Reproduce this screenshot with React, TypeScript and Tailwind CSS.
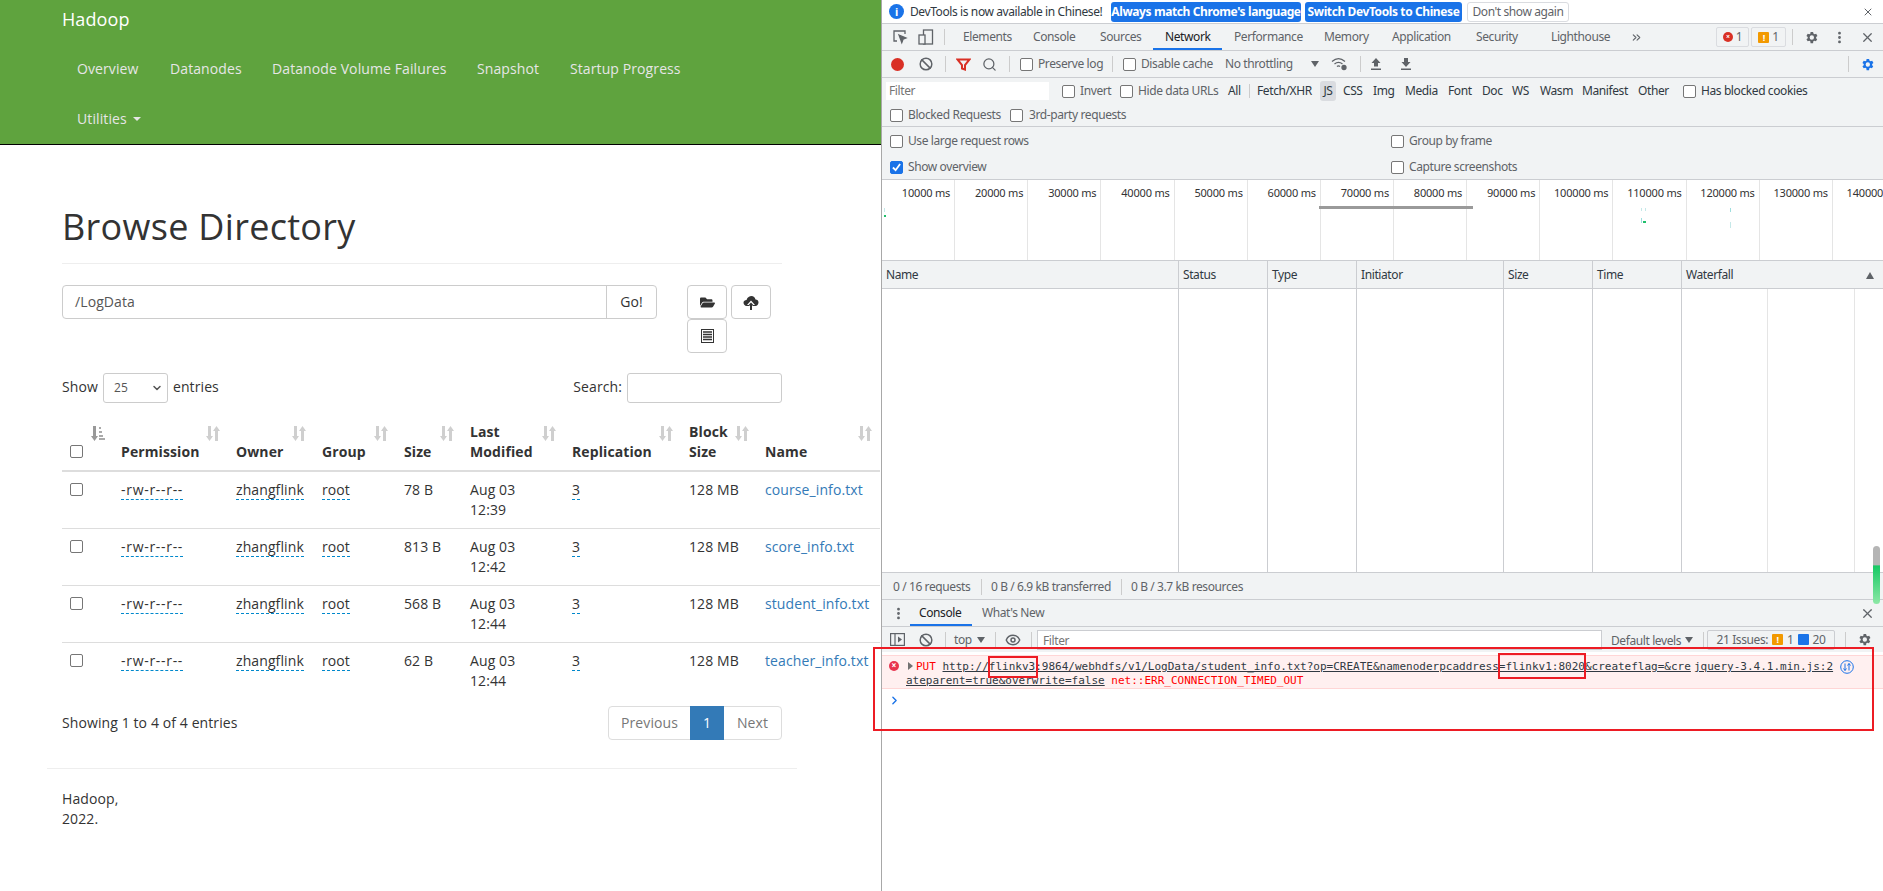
import { ReactNode } from "react";
import { X, MoreVertical, Search, ChevronRight, ChevronsRight, Eye, Ban, ChevronDown } from "lucide-react";
import { FaFolderOpen } from "react-icons/fa";

const files = [
  { size: "78 B", time: "12:39", name: "course_info.txt" },
  { size: "813 B", time: "12:42", name: "score_info.txt" },
  { size: "568 B", time: "12:44", name: "student_info.txt" },
  { size: "62 B", time: "12:44", name: "teacher_info.txt" },
];

const columns = [
  { label: ["", ""], w: "w-[51px]" },
  { label: ["", "Permission"], w: "w-[115px]" },
  { label: ["", "Owner"], w: "w-[86px]" },
  { label: ["", "Group"], w: "w-[82px]" },
  { label: ["", "Size"], w: "w-[66px]" },
  { label: ["Last", "Modified"], w: "w-[102px]" },
  { label: ["", "Replication"], w: "w-[117px]" },
  { label: ["Block", "Size"], w: "w-[76px]" },
  { label: ["", "Name"], w: "w-[123px]" },
];

function SortIcon({ first }: { first?: boolean }) {
  return (
    <svg width="14" height="15" viewBox="0 0 14 15" className="absolute right-[8px] top-[5px] text-[#cfcfcf]" fill="currentColor">
      {first ? (
        <>
          <path d="M2 0h3v10h2l-3.500 5L0 10h2z" fill="#999" />
          <path d="M8 1h2v2H8zM8 5h3v2H8zM8 9h4v2H8zM8 12h6v2H8z" fill="#aaa" />
        </>
      ) : (
        <>
          <path d="M2 0h3v10h2l-3.500 5L0 10h2z" />
          <path d="M9 15V5H7l3.500-5L14 5h-2v10z" />
        </>
      )}
    </svg>
  );
}

function Box({ checked, className = "" }: { checked?: boolean; className?: string }) {
  return (
    <span
      className={`inline-flex h-[13px] w-[13px] shrink-0 items-center justify-center rounded-[2px] border ${
        checked ? "border-[#1a73e8] bg-[#1a73e8]" : "border-[#767676] bg-white"
      } ${className}`}
    >
      {checked && (
        <svg width="9" height="9" viewBox="0 0 10 10" fill="none" stroke="white" strokeWidth="2">
          <path d="M1 5l3 3 5-7" />
        </svg>
      )}
    </span>
  );
}

function Sep({ className = "" }: { className?: string }) {
  return <span className={`h-[16px] w-px shrink-0 bg-[#ccc] ${className}`} />;
}

function Abbr({ children }: { children: ReactNode }) {
  return <span className="border-b border-dashed border-[#0088cc]">{children}</span>;
}

function IconBtn({ children }: { children: ReactNode }) {
  return (
    <div className="flex h-[34px] w-[40px] items-center justify-center rounded-[4px] border border-[#ccc]">{children}</div>
  );
}

function Hadoop() {
  return (
    <div className="w-[881px] shrink-0 text-[14px] leading-[20px] tracking-[0.1px] text-[#333] [font-family:'Open_Sans',sans-serif]">
      <div className="h-[145px] border-b border-black bg-[#5fa33e]">
        <div className="flex h-[38px] items-center pl-[62px] text-[18px] text-white">Hadoop</div>
        <div className="flex h-[62px] items-center pl-[77px] text-[#e6e6e6]">
          <span className="w-[93px]">Overview</span>
          <span className="w-[102px]">Datanodes</span>
          <span className="w-[205px]">Datanode Volume Failures</span>
          <span className="w-[93px]">Snapshot</span>
          <span>Startup Progress</span>
        </div>
        <div className="flex h-[38px] items-center pl-[77px] text-[#e6e6e6]">
          Utilities
          <span className="ml-[6px] border-x-[4px] border-t-[4px] border-x-transparent border-t-[#e6e6e6]" />
        </div>
      </div>

      <div className="pl-[62px] pr-[99px]">
        <h1 className="mt-[59px] flex h-[46px] items-center text-[36px] font-normal tracking-[0.3px]">Browse Directory</h1>
        <div className="mt-[13px] h-px bg-[#eee]" />
        <div className="mt-[21px] flex">
          <div className="flex h-[34px] w-[595px] rounded-[4px] border border-[#ccc]">
            <div className="flex flex-1 items-center pl-[12px] text-[#555]">/LogData</div>
            <div className="flex w-[50px] items-center justify-center border-l border-[#ccc]">Go!</div>
          </div>
          <div className="ml-[30px] flex w-[90px] flex-wrap gap-x-[4px] gap-y-0">
            <IconBtn><FaFolderOpen size={15} className="text-[#333]" /></IconBtn>
            <IconBtn>
              <svg width="16" height="15" viewBox="0 0 16 15" fill="#333">
                <path d="M4 11C1.500 11 .5 9 .5 7.500S2 5 3.500 5C4.500 2 6.500 1 8.500 1c2 0 3.500 1.500 4 3.500 1.800 0 3 1.300 3 3S14 11 12.500 11z" />
                <path d="M8 5.500l4 4.500H9.500v5h-3v-5H4z" fill="#fff" />
                <path d="M8 7.500l2.500 2.800H9V15H7v-4.700H5.500z" />
              </svg>
            </IconBtn>
            <IconBtn>
              <svg width="13" height="14" viewBox="0 0 13 14">
                <rect x="0.500" y="0.500" width="12" height="13" fill="#fff" stroke="#333" />
                <path d="M2 3h9M2 5.500h9M2 8h9M2 10.500h9" stroke="#333" strokeWidth="1.300" />
              </svg>
            </IconBtn>
          </div>
        </div>

        <div className="mt-[20px] flex h-[30px] items-center">
          <span className="-mt-[2px]">Show</span>
          <span className="mx-[5px] flex h-[30px] w-[65px] items-center justify-between rounded-[3px] border border-[#ccc] pl-[10px] pr-[4px] text-[12px] text-[#555]">
            25
            <ChevronDown size={12} strokeWidth={3} />
          </span>
          <span className="-mt-[2px]">entries</span>
          <span className="-mt-[2px] ml-auto">Search:</span>
          <span className="ml-[5px] h-[30px] w-[155px] rounded-[3px] border border-[#ccc]" />
        </div>

        <table className="mt-[18px] w-[818px] table-fixed border-collapse">
          <thead>
            <tr className="border-b-2 border-[#ddd]">
              {columns.map((c, i) => (
                <th key={i} className={`${c.w} relative h-[50px] p-0 pb-[8px] pl-[8px] text-left align-bottom font-bold`}>
                  <SortIcon first={i === 0} />
                  {i === 0 ? <Box className="-mb-[1px]" /> : (
                    <>
                      {c.label[0] && <div>{c.label[0]}</div>}
                      <div>{c.label[1]}</div>
                    </>
                  )}
                </th>
              ))}
            </tr>
          </thead>
          <tbody>
            {files.map((f) => (
              <tr key={f.name} className="h-[57px] border-b border-[#ddd] last:border-b-0">
                <td className="p-0 pt-[8px] pl-[8px] align-top"><Box className="mt-[3px]" /></td>
                <td className="p-0 pt-[8px] pl-[8px] align-top tracking-[0.7px]"><Abbr>-rw-r--r--</Abbr></td>
                <td className="p-0 pt-[8px] pl-[8px] align-top"><Abbr>zhangflink</Abbr></td>
                <td className="p-0 pt-[8px] pl-[8px] align-top"><Abbr>root</Abbr></td>
                <td className="p-0 pt-[8px] pl-[8px] align-top">{f.size}</td>
                <td className="p-0 pt-[8px] pl-[8px] align-top"><div>Aug 03</div><div>{f.time}</div></td>
                <td className="p-0 pt-[8px] pl-[8px] align-top"><Abbr>3</Abbr></td>
                <td className="p-0 pt-[8px] pl-[8px] align-top">128 MB</td>
                <td className="p-0 pt-[8px] pl-[8px] align-top text-[#337ab7]">{f.name}</td>
              </tr>
            ))}
          </tbody>
        </table>

        <div className="mt-[7px] flex h-[34px] items-center justify-between">
          <span className="-mt-[1px]">Showing 1 to 4 of 4 entries</span>
          <div className="flex h-[34px] rounded-[4px] border border-[#ddd]">
            <span className="flex w-[81px] items-center justify-center text-[#777]">Previous</span>
            <span className="-my-px flex w-[34px] items-center justify-center bg-[#337ab7] text-white">1</span>
            <span className="flex w-[57px] items-center justify-center text-[#777]">Next</span>
          </div>
        </div>
      </div>
      <div className="ml-[47px] mt-[28px] h-px w-[750px] bg-[#eee]" />
      <div className="mt-[20px] pl-[62px]">
        <div>Hadoop,</div>
        <div>2022.</div>
      </div>
    </div>
  );
}

const tabs = [
  ["Elements", "w-[70px]"],
  ["Console", "w-[67px]"],
  ["Sources", "w-[65px]"],
  ["Network", "w-[69px]"],
  ["Performance", "w-[90px]"],
  ["Memory", "w-[68px]"],
  ["Application", "w-[84px]"],
  ["Security", "w-[75px]"],
  ["Lighthouse", "w-[79px]"],
];

const types = [
  ["CSS", "w-[30px]"],
  ["Img", "w-[32px]"],
  ["Media", "w-[43px]"],
  ["Font", "w-[34px]"],
  ["Doc", "w-[30px]"],
  ["WS", "w-[28px]"],
  ["Wasm", "w-[42px]"],
  ["Manifest", "w-[56px]"],
  ["Other", "w-[45px]"],
];

const ticks = [10, 20, 30, 40, 50, 60, 70, 80, 90, 100, 110, 120, 130, 140];
const gridCols = ["w-[297px]", "w-[89px]", "w-[89px]", "w-[147px]", "w-[89px]", "w-[89px]", "flex-1"];
const gridHeads = ["Name", "Status", "Type", "Initiator", "Size", "Time", "Waterfall"];

function GearSolid({ className = "" }: { className?: string }) {
  return (
    <svg width="15" height="15" viewBox="0 0 24 24" className={className} fill="currentColor">
      <path fillRule="evenodd" d="M19.400 13a7.600 7.600 0 000-2l2.100-1.600-2-3.500-2.500 1a7.500 7.500 0 00-1.700-1L14.500 3h-4l-.4 2.900a7.500 7.500 0 00-1.700 1l-2.500-1-2 3.500L6 11a7.600 7.600 0 000 2l-2.100 1.600 2 3.500 2.500-1a7.500 7.500 0 001.700 1l.4 2.900h4l.4-2.900a7.500 7.500 0 001.700-1l2.500 1 2-3.500zM12.500 15.500a3.500 3.500 0 110-7 3.500 3.500 0 010 7z" />
    </svg>
  );
}

function DevTools() {
  return (
    <div className="relative flex h-[891px] min-w-0 flex-1 flex-col whitespace-nowrap border-l border-[#a8a8a8] bg-[#f1f3f4] text-[12px] leading-[14px] tracking-[-0.4px] text-[#5f6368] [font-family:'Noto_Sans',sans-serif]">
      {/* language infobar */}
      <div className="flex h-[24px] shrink-0 items-center border-b border-[#cbcdd1] bg-white pl-[7px]">
        <span className="flex h-[15px] w-[15px] items-center justify-center rounded-full bg-[#1a73e8] text-[11px] font-bold text-white">i</span>
        <span className="ml-[6px] w-[201px] text-[#303942]">DevTools is now available in Chinese!</span>
        <span className="flex h-[20px] w-[190px] items-center justify-center rounded-[3px] bg-[#1a73e8] font-bold text-white">Always match Chrome's language</span>
        <span className="ml-[4px] flex h-[20px] w-[157px] items-center justify-center rounded-[3px] bg-[#1a73e8] font-bold text-white">Switch DevTools to Chinese</span>
        <span className="ml-[5px] flex h-[20px] w-[102px] items-center justify-center rounded-[3px] border border-[#dadce0] bg-white text-[#5f6368]">Don't show again</span>
        <X size={12} className="ml-auto mr-[9px]" />
      </div>

      {/* main tabs */}
      <div className="flex h-[27px] shrink-0 items-center border-b border-[#cbcdd1] pl-[10px]">
        <svg width="16" height="16" viewBox="0 0 16 16" fill="none" stroke="#5f6368" strokeWidth="1.300">
          <path d="M13 5V2H2v10h3" />
          <path d="M7 6l7 3-3 1.200L9.800 13.500z" fill="#5f6368" />
        </svg>
        <svg width="16" height="16" viewBox="0 0 16 16" fill="none" stroke="#5f6368" strokeWidth="1.300" className="ml-[10px]">
          <rect x="5.500" y="1" width="9" height="14" />
          <rect x="1" y="6" width="6" height="9" fill="#f1f3f4" />
        </svg>
        <Sep className="ml-[10px]" />
        <div className="ml-[18px] flex h-full items-center">
          {tabs.map(([label, w]) => (
            <span key={label} className={`relative flex h-full items-center ${w} ${label === "Network" ? "text-[#202124]" : ""}`}>
              {label}
              {label === "Network" && <span className="absolute -left-[12px] bottom-0 h-[2px] w-[69px] bg-[#1a73e8]" />}
            </span>
          ))}
        </div>
        <ChevronsRight size={13} />
        <div className="ml-auto flex items-center">
          <span className="flex h-[20px] w-[33px] items-center justify-center gap-[3px] rounded-[2px] border border-[#dadce0]">
            <span className="flex h-[10px] w-[10px] items-center justify-center rounded-full bg-[#d93025] text-[7px] font-bold text-white">×</span>1
          </span>
          <span className="ml-[2px] flex h-[20px] w-[35px] items-center justify-center gap-[3px] rounded-[2px] border border-[#dadce0]">
            <span className="flex h-[11px] w-[11px] items-center justify-center rounded-[1px] bg-[#f29900] text-[9px] font-bold leading-none text-white">!</span>1
          </span>
          <Sep className="ml-[6px]" />
          <GearSolid className="ml-[11px]" />
          <MoreVertical size={15} strokeWidth={2.500} className="ml-[13px]" />
          <X size={15} strokeWidth={2} className="ml-[13px] mr-[8px]" />
        </div>
      </div>

      {/* network toolbar */}
      <div className="flex h-[27px] shrink-0 items-center border-b border-[#cbcdd1] pl-[9px]">
        <span className="h-[13px] w-[13px] rounded-full bg-[#d93025]" />
        <Ban size={14} strokeWidth={2.500} className="ml-[15px]" />
        <Sep className="ml-[12px]" />
        <svg width="15" height="13" viewBox="0 0 15 13" fill="none" stroke="#d93025" strokeWidth="2" className="ml-[10px]">
          <path d="M1.500 1.500h12L9 7v4.500l-3-1V7z" />
        </svg>
        <Search size={15} className="ml-[11px]" />
        <Sep className="ml-[12px]" />
        <Box className="ml-[10px]" />
        <span className="ml-[5px] w-[74px]">Preserve log</span>
        <Sep />
        <Box className="ml-[10px]" />
        <span className="ml-[5px] w-[84px]">Disable cache</span>
        <span className="w-[85px]">No throttling</span>
        <span className="ml-[1px] border-x-[4px] border-t-[6px] border-x-transparent border-t-[#5f6368]" />
        <svg width="17" height="14" viewBox="0 0 17 14" fill="none" stroke="#5f6368" strokeWidth="1.300" className="ml-[12px]">
          <path d="M1 4.500c4-3.500 9-3.500 13 0M3.500 7c2.500-2 5.500-2 8 0M6 9.500c.8-.7 2.200-.7 3 0" />
          <circle cx="13" cy="10.500" r="2" fill="#5f6368" />
        </svg>
        <Sep className="ml-[12px]" />
        <svg width="12" height="12" viewBox="0 0 12 12" fill="#5f6368" className="ml-[9px]">
          <path d="M6 0l4.500 5H8v3.500H4V5H1.500zM1 10.500h10V12H1z" />
        </svg>
        <svg width="12" height="12" viewBox="0 0 12 12" fill="#5f6368" className="ml-[18px]">
          <path d="M4 0h4v4h2.500L6 9 1.500 4H4zM1 10.500h10V12H1z" />
        </svg>
        <Sep className="ml-auto" />
        <GearSolid className="ml-[11px] mr-[8px] text-[#1a73e8]" />
      </div>

      {/* filter rows */}
      <div className="flex h-[26px] shrink-0 items-center pl-[4px]">
        <span className="flex h-[18px] w-[163px] items-center bg-white pl-[3px] text-[#757575]">Filter</span>
        <Box className="ml-[13px]" />
        <span className="ml-[5px] w-[40px]">Invert</span>
        <Box />
        <span className="ml-[5px] w-[90px]">Hide data URLs</span>
        <div className="flex items-center text-[#303942]">
          <span className="w-[21px]">All</span>
          <span className="w-[71px] border-l border-[#ccc] pl-[7px]">Fetch/XHR</span>
          <span className="flex h-[20px] w-[16px] items-center justify-center rounded-[3px] bg-[#dadce0]">JS</span>
          <span className="w-[7px]" />
          {types.map(([label, w]) => (
            <span key={label} className={w}>{label}</span>
          ))}
        </div>
        <Box />
        <span className="ml-[5px] text-[#303942]">Has blocked cookies</span>
      </div>
      <div className="flex h-[23px] shrink-0 items-center border-b border-[#cbcdd1] pl-[8px]">
        <Box />
        <span className="ml-[5px] w-[102px]">Blocked Requests</span>
        <Box />
        <span className="ml-[6px]">3rd-party requests</span>
      </div>
      <div className="flex h-[53px] shrink-0 border-b border-[#cbcdd1] pl-[8px]">
        <div className="flex w-[501px] flex-col">
          <div className="flex h-[28px] items-center"><Box /><span className="ml-[5px]">Use large request rows</span></div>
          <div className="flex h-[24px] items-center"><Box checked /><span className="ml-[5px]">Show overview</span></div>
        </div>
        <div className="flex flex-col">
          <div className="flex h-[28px] items-center"><Box /><span className="ml-[5px]">Group by frame</span></div>
          <div className="flex h-[24px] items-center"><Box /><span className="ml-[5px]">Capture screenshots</span></div>
        </div>
      </div>

      {/* overview */}
      <div className="relative flex h-[81px] shrink-0 overflow-hidden border-b border-[#cbcdd1] bg-white text-[11px] tracking-[-0.2px] text-[#333]">
        {ticks.map((t) => (
          <div key={t} className="h-full w-[73.150px] shrink-0 border-r border-[#e5e5e5] pr-[4px] pt-[6px] text-right">
            {t}000 ms
          </div>
        ))}
        <span className="absolute left-[437px] top-[26px] h-[3px] w-[154px] bg-[#9a9a9a]" />
        <span className="absolute left-[2px] top-[35px] h-[2px] w-[2px] bg-[#1fbf6b]" />
        <span className="absolute left-[2px] top-[28px] h-[4px] w-px bg-[#c5e8e8]" />
        <span className="absolute left-[759px] top-[28px] h-[3px] w-px bg-[#c5e8e8]" />
        <span className="absolute left-[763px] top-[28px] h-[3px] w-px bg-[#c5e8e8]" />
        <span className="absolute left-[759px] top-[38px] h-[5px] w-px bg-[#9edede]" />
        <span className="absolute left-[761px] top-[41px] h-[2px] w-[3px] bg-[#1fbf6b]" />
        <span className="absolute left-[848px] top-[28px] h-[4px] w-px bg-[#9edede]" />
        <span className="absolute left-[848px] top-[42px] h-[6px] w-px bg-[#c5e8e8]" />
      </div>

      {/* request grid */}
      <div className="flex h-[28px] shrink-0 border-b border-[#cbcdd1]">
        {gridHeads.map((h, i) => (
          <div key={h} className={`flex items-center pl-[4px] pt-px text-[#303942] ${gridCols[i]} ${i < 6 ? "border-r border-[#cbcdd1]" : ""}`}>
            {h}
            {i === 6 && <span className="ml-auto mr-[9px] border-x-[4px] border-b-[7px] border-x-transparent border-b-[#5f6368]" />}
          </div>
        ))}
      </div>
      <div className="flex h-[283px] shrink-0 bg-white">
        {gridCols.slice(0, 6).map((w, i) => (
          <div key={i} className={`${w} border-r border-[#cbcdd1]`} />
        ))}
        <div className="w-[86px] border-r border-[#e5e5e5]" />
        <div className="w-[87px] border-r border-[#e5e5e5]" />
      </div>

      {/* status bar */}
      <div className="flex h-[28px] shrink-0 items-center border-y border-[#cbcdd1] pl-[11px] pt-px">
        <span className="w-[88px]">0 / 16 requests</span>
        <Sep />
        <span className="ml-[9px] w-[130px]">0 B / 6.9 kB transferred</span>
        <Sep />
        <span className="ml-[9px]">0 B / 3.7 kB resources</span>
      </div>

      {/* drawer */}
      <div className="flex h-[27px] shrink-0 items-center border-b border-[#cbcdd1]">
        <MoreVertical size={15} strokeWidth={2.500} className="ml-[9px]" />
        <span className="relative ml-[13px] flex h-full w-[63px] items-center text-[#202124]">
          Console
          <span className="absolute -left-[9px] bottom-0 h-[2px] w-[62px] bg-[#1a73e8]" />
        </span>
        <span>What's New</span>
        <X size={15} className="ml-auto mr-[8px]" />
      </div>
      <div className="flex h-[25px] shrink-0 items-center pl-[8px]">
        <svg width="15" height="13" viewBox="0 0 15 13" fill="none" stroke="#5f6368" strokeWidth="1.200">
          <rect x="0.600" y="0.600" width="13.800" height="11.800" />
          <path d="M5 1v11" />
          <path d="M8 3.500l4 3-4 3z" fill="#5f6368" stroke="none" />
        </svg>
        <Ban size={14} strokeWidth={2.500} className="ml-[14px]" />
        <Sep className="ml-[12px]" />
        <span className="ml-[8px] w-[18px]">top</span>
        <span className="ml-[5px] border-x-[4px] border-t-[6px] border-x-transparent border-t-[#5f6368]" />
        <Sep className="ml-[10px]" />
        <Eye size={16} strokeWidth={2.200} className="ml-[9px]" />
        <Sep className="ml-[10px]" />
        <span className="ml-[5px] flex h-[20px] w-[565px] items-center border border-[#cbcdd1] bg-white pl-[5px] pt-[2px] text-[#757575]">Filter</span>
        <span className="ml-[9px] w-[70px] pt-[2px]">Default levels</span>
        <span className="ml-[4px] border-x-[4px] border-t-[6px] border-x-transparent border-t-[#5f6368]" />
        <Sep className="ml-[10px]" />
        <span className="ml-[3px] flex h-[20px] w-[128px] items-center justify-center gap-[4px] rounded-[2px] border border-[#cbcdd1]">
          21 Issues:
          <span className="flex h-[11px] w-[11px] items-center justify-center rounded-[1px] bg-[#f29900] text-[9px] font-bold text-white">!</span>1
          <span className="h-[11px] w-[11px] rounded-[1px] bg-[#1a73e8]" />20
        </span>
        <Sep className="ml-[10px]" />
        <GearSolid className="ml-[11px]" />
      </div>

      {/* console output */}
      <div className="flex min-h-0 flex-1 flex-col bg-white">
        <div className="mt-[3px] flex h-[34px] shrink-0 border-y border-[#ffd6d6] bg-[#fff0f0] pt-[4px] text-[11px] leading-[14px] tracking-normal text-[#303942] [font-family:'DejaVu_Sans_Mono',monospace]">
          <span className="ml-[7px] mt-[1px] flex h-[10px] w-[10px] items-center justify-center rounded-full bg-[#e8344e] text-[8px] font-bold text-white">×</span>
          <div className="ml-[7px] w-[788px]">
            <div>
              <span className="ml-[2px] inline-block border-y-[4px] border-l-[5px] border-y-transparent border-l-[#727272]" />
              <span className="ml-[3px] text-[#f00]">PUT </span>
              <span className="underline">http://flinkv3:9864/webhdfs/v1/LogData/student_info.txt?op=CREATE&amp;namenoderpcaddress=flinkv1:8020&amp;createflag=&amp;cre</span>
            </div>
            <div>
              <span className="underline">ateparent=true&amp;overwrite=false</span>
              <span className="text-[#f00]"> net::ERR_CONNECTION_TIMED_OUT</span>
            </div>
          </div>
          <span className="underline">jquery-3.4.1.min.js:2</span>
          <svg width="14" height="14" viewBox="0 0 14 14" fill="none" stroke="#1a73e8" strokeWidth="1" className="ml-[7px]">
            <circle cx="7" cy="7" r="6.300" />
            <path d="M5 3.500v7M3.500 8.500L5 10.500l1.500-2M9 10.500v-7M7.500 5.500L9 3.500l1.500 2" />
          </svg>
        </div>
        <ChevronRight size={13} strokeWidth={2.500} className="ml-[6px] mt-[5px] text-[#1a73e8]" />
      </div>

      {/* drawer splitter grip */}
      <span className="absolute right-[3px] top-[546px] h-[58px] w-[7px] rounded-[4px] bg-[linear-gradient(#b5b5b5_0,#b5b5b5_33%,#17c964_34%,#8de8a6_100%)]" />
    </div>
  );
}

export default function App() {
  return (
    <div className="relative flex h-[891px] w-[1883px] overflow-hidden bg-white">
      <Hadoop />
      <DevTools />
      {/* red annotation boxes drawn over the screenshot */}
      <div className="pointer-events-none absolute left-[873px] top-[647px] h-[84px] w-[1001px] border-[2px] border-[#ed1c24]" />
      <div className="pointer-events-none absolute left-[988px] top-[656px] h-[22px] w-[50px] border-[2px] border-[#ed1c24]" />
      <div className="pointer-events-none absolute left-[1498px] top-[653px] h-[26px] w-[88px] border-[2px] border-[#ed1c24]" />
    </div>
  );
}
